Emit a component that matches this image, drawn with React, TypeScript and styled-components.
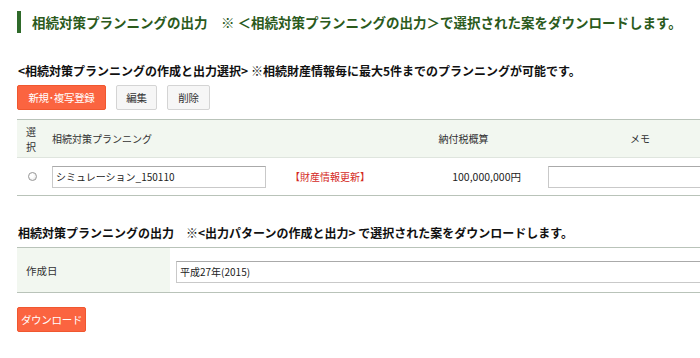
import React from 'react';
import { styled, createGlobalStyle } from 'styled-components';

const GlobalStyle = createGlobalStyle`
  html, body {
    margin: 0;
    padding: 0;
    background: #fff;
    overflow: hidden;
  }
  body {
    font-family: "Noto Sans CJK JP", "Liberation Sans", sans-serif;
    color: #222;
  }
`;

const Page = styled.div`
  width: 740px;
  padding: 10px 0 0 17px;
`;

const PageTitle = styled.h1`
  margin: 0;
  display: flex;
  align-items: center;
  gap: 11px;
  height: 23px;
  font-size: 13.5px;
  font-weight: bold;
  color: #2b5a1c;
  white-space: nowrap;

  &::before {
    content: '';
    width: 4px;
    height: 22px;
    background: #2f6a2a;
  }
`;

const SectionTitle = styled.h2<{ $top: number }>`
  margin: ${(p) => p.$top}px 0 0 1px;
  font-size: 12px;
  font-weight: bold;
  line-height: 16px;
  white-space: nowrap;
  color: #111;
`;

const Toolbar = styled.div`
  display: flex;
  gap: 10px;
  margin-top: 6px;
`;

const Button = styled.button<{ $primary?: boolean; $width: number }>`
  width: ${(p) => p.$width}px;
  height: 25px;
  padding: 0;
  border-radius: 2px;
  font-family: inherit;
  font-size: 10.5px;
  letter-spacing: -0.3px;
  cursor: pointer;
  background: ${(p) => (p.$primary ? '#fb6440' : '#f6f6f6')};
  color: ${(p) => (p.$primary ? '#fff' : '#333')};
  border: 1px solid ${(p) => (p.$primary ? '#f0572f' : '#d4d4d4')};
`;

const PlanTable = styled.table`
  margin-top: 9px;
  width: 723px;
  border-collapse: collapse;
  table-layout: fixed;
  font-size: 10px;
  border-top: 1px solid #b9c3b9;
  border-bottom: 1px solid #b9c3b9;
`;

const HeadRow = styled.tr`
  background: #f2f7f0;
  height: 38px;
  border-bottom: 1px solid #dfe5de;
`;

const HeadCell = styled.th<{ $align?: string; $pad?: string }>`
  font-weight: normal;
  text-align: ${(p) => p.$align || 'left'};
  padding: ${(p) => p.$pad || '0'};
  color: #333;
  line-height: 15px;
`;

const BodyRow = styled.tr`
  height: 38px;
`;

const Cell = styled.td<{ $align?: string; $pad?: string }>`
  text-align: ${(p) => p.$align || 'left'};
  padding: ${(p) => p.$pad || '0'};
  font-size: 10.5px;
  color: #222;
`;

const Radio = styled.span`
  display: block;
  width: 7px;
  height: 7px;
  margin-left: 11px;
  border-radius: 50%;
  border: 1px solid #999;
  background: radial-gradient(circle at 40% 40%, #fff 30%, #ddd 100%);
`;

const TextInput = styled.input<{ $width: number }>`
  box-sizing: border-box;
  width: ${(p) => p.$width}px;
  height: 22px;
  padding: 0 3px;
  border: 1px solid #c9c9c9;
  border-top-color: #aaa;
  font-family: inherit;
  font-size: 10px;
  color: #222;
`;

const Notice = styled.span`
  color: #d42a1f;
  font-size: 10px;
`;

const FormTable = styled.table`
  margin-top: 6px;
  width: 723px;
  border-collapse: collapse;
  border-top: 1px solid #b9c3b9;
  border-bottom: 1px solid #b9c3b9;
`;

const LabelCell = styled.th`
  width: 144px;
  height: 44px;
  padding: 0 0 0 9px;
  background: #f2f7f0;
  text-align: left;
  font-weight: normal;
  font-size: 10.5px;
  color: #333;
`;

const ValueCell = styled.td`
  padding: 0 0 0 6px;
`;

const Footer = styled.div`
  margin-top: 12px;
`;

export default function App() {
  return (
    <Page>
      <GlobalStyle />
      <PageTitle>相続対策プランニングの出力　※ ＜相続対策プランニングの出力＞で選択された案をダウンロードします。</PageTitle>

      <SectionTitle $top={30}>
        &lt;相続対策プランニングの作成と出力選択&gt; ※相続財産情報毎に最大5件までのプランニングが可能です。
      </SectionTitle>
      <Toolbar>
        <Button $primary $width={89}>新規･複写登録</Button>
        <Button $width={41}>編集</Button>
        <Button $width={43}>削除</Button>
      </Toolbar>

      <PlanTable>
        <colgroup>
          <col style={{ width: 28 }} />
          <col style={{ width: 235 }} />
          <col style={{ width: 95 }} />
          <col style={{ width: 165 }} />
          <col style={{ width: 200 }} />
        </colgroup>
        <thead>
          <HeadRow>
            <HeadCell $align="center">選<br />択</HeadCell>
            <HeadCell colSpan={2} $pad="0 0 0 7px">相続対策プランニング</HeadCell>
            <HeadCell $align="center" $pad="0 0 0 12px">納付税概算</HeadCell>
            <HeadCell $align="center">メモ</HeadCell>
          </HeadRow>
        </thead>
        <tbody>
          <BodyRow>
            <Cell><Radio /></Cell>
            <Cell $pad="0 0 0 7px"><TextInput $width={214} defaultValue="シミュレーション_150110" /></Cell>
            <Cell $pad="0 0 0 10px"><Notice>【財産情報更新】</Notice></Cell>
            <Cell $align="right" $pad="0 19px 0 0">100,000,000円</Cell>
            <Cell $pad="0 0 0 8px"><TextInput $width={190} defaultValue="" /></Cell>
          </BodyRow>
        </tbody>
      </PlanTable>

      <SectionTitle $top={29}>
        相続対策プランニングの出力　※&lt;出力パターンの作成と出力&gt; で選択された案をダウンロードします。
      </SectionTitle>
      <FormTable>
        <tbody>
          <tr>
            <LabelCell>作成日</LabelCell>
            <ValueCell><TextInput $width={560} defaultValue="平成27年(2015)" /></ValueCell>
          </tr>
        </tbody>
      </FormTable>

      <Footer>
        <Button $primary $width={69}>ダウンロード</Button>
      </Footer>
    </Page>
  );
}
